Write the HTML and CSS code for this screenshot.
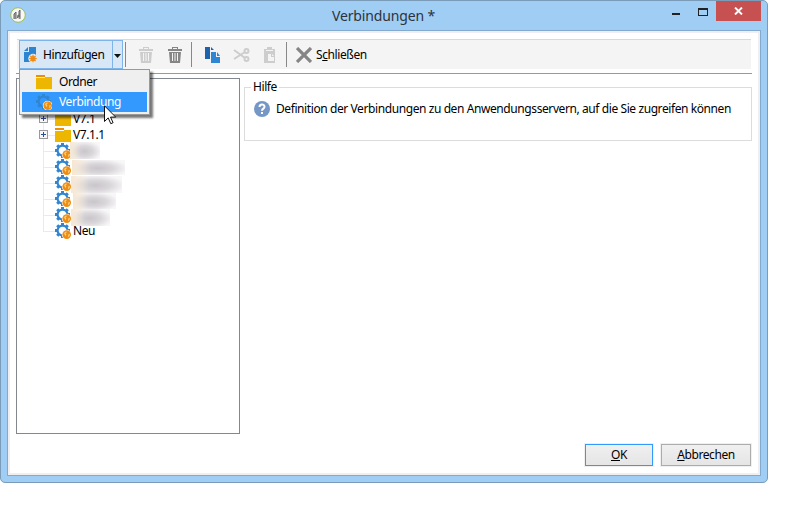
FILE: index.html
```html
<!DOCTYPE html>
<html lang="de">
<head>
<meta charset="utf-8">
<title>Verbindungen</title>
<link rel="stylesheet" href="styles.css">
</head>
<body>
<svg class="defs" width="0" height="0">
  <symbol id="folder" viewBox="0 0 16 16"><path fill="#f09000" d="M0 1h9v2H0z"/><path fill="#edb600" d="M0 4h9V3h7v12H0z"/></symbol>
  <symbol id="gear" viewBox="0 0 16 16">
    <circle cx="7.5" cy="7.5" r="4.9" fill="none" stroke="#3186d2" stroke-width="2.2"/>
    <path d="M7.5 0v3M7.5 12v3M0 7.5h3M12 7.5h3M2.2 2.2l2 2M12.8 2.2l-2 2M2.2 12.8l2-2" stroke="#3186d2" stroke-width="3"/>
  </symbol>
  <symbol id="globe" viewBox="0 0 16 16">
    <circle cx="11.7" cy="11.6" r="4.9" fill="#fff" class="halo"/>
    <circle cx="11.7" cy="11.6" r="4.3" fill="#ef8d0e"/>
    <path d="M9 10l2-1.6 1 .6-1.6 1.6 1 1-1 1.4zM13.6 11l1.4.3-.8 2.2-1.2.4z" fill="#ffdda5" opacity=".85"/>
  </symbol>
  <symbol id="trash" viewBox="0 0 16 16">
    <path fill="currentColor" d="M5 0h6v2h4v2H1V2h4zM6 1v1h4V1zM2 5h12l-1 11H3z"/>
    <path stroke="#f4f4f4" fill="none" d="M5.5 6v8M8 6v8M10.5 6v8"/>
  </symbol>
</svg>
<div class="window">
  <header class="titlebar">
    <svg class="logo" width="16" height="16" viewBox="0 0 16 16"><circle cx="8" cy="8" r="7.3" fill="#f7f7f4" stroke="#9cbd58"/><path d="M4 12V7l2-2v7M7.500 11c0-4 1.500-4 1.500-1V4l1-1v9" fill="#aaa" stroke="#666"/></svg>
    <h1><span>Verbindungen *</span></h1>
    <div class="controls">
      <svg width="50" height="20" viewBox="0 0 50 20"><path d="M6 13h8v2H6z" fill="#222"/><path d="M32 8h10v8H32zm1 2v5h8v-5z" fill="#222" fill-rule="evenodd"/></svg>
      <div class="close"><svg width="9" height="8" viewBox="0 0 9 8"><path d="M1 .5l7 7M8 .5l-7 7" stroke="#fff" stroke-width="1.9"/></svg></div>
    </div>
  </header>
  <main class="client">
    <div class="toolbar">
      <div class="split">
        <div class="split-main">
          <svg width="16" height="16" viewBox="0 0 16 16"><path fill="#2d84d0" d="M5 0h7v15H0V5h5zM0 4l4-4v4z"/><circle cx="9" cy="11.500" r="4.700" fill="#d8e8f7"/><circle cx="9" cy="11.500" r="2.600" fill="#f18b12"/><path d="M9 7.700v7.600M5.200 11.500h7.600M6.300 8.800l5.400 5.400M11.700 8.800l-5.400 5.400" stroke="#f18b12" stroke-width="1.200"/></svg>
          <span>Hinzufügen</span>
        </div>
        <div class="split-arrow"><svg width="8" height="4" viewBox="0 0 8 4"><path d="M0 0h7L3.500 4z" fill="#111"/></svg></div>
        <div class="menu">
          <div class="menu-item"><svg width="16" height="16"><use href="#folder"/></svg><span>Ordner</span></div>
          <div class="menu-item active"><svg width="16" height="16"><use href="#gear"/><use href="#globe"/></svg><span>Verbindung</span></div>
          <svg class="cursor" width="13" height="20" viewBox="0 0 13 20"><path d="M.5.8v15.700l3.700-3.600 2.600 5.800 2.300-1-2.600-5.600h5.200z" fill="#fff" stroke="#111"/></svg>
        </div>
      </div>
      <i class="sep"></i>
      <svg class="tool first off" width="16" height="16"><use href="#trash"/></svg>
      <svg class="tool second" width="16" height="16"><use href="#trash"/></svg>
      <i class="sep"></i>
      <svg class="tool copy" width="16" height="16" viewBox="0 0 16 16"><path d="M0 0h5v12H0zM6 0l3 3H6z" fill="#1c62ad"/><path d="M6 5h5v5h4v6H6zM12 5l3 4h-3z" fill="#2f86d5"/></svg>
      <svg class="tool cut off" width="17" height="16" viewBox="0 0 17 16"><g fill="none" stroke="currentColor" stroke-width="2"><circle cx="13.500" cy="4" r="2"/><circle cx="13.500" cy="12" r="2"/><path d="M1 3l11 8M1 12l11-7"/></g></svg>
      <svg class="tool paste off" width="14" height="16" viewBox="0 0 14 16"><path d="M1 2h3V0h5v2h3v14H1z" fill="currentColor"/><path d="M3 3h7v1H3zM5 7h3v3h3v4H5zM9 7l2 2H9z" fill="#f4f4f4"/></svg>
      <i class="sep"></i>
      <svg class="tool x" width="16" height="16" viewBox="0 0 16 16"><path d="M1 1l14 14M15 1L1 15" stroke="#858585" stroke-width="3.200"/></svg>
      <span>S<u>c</u>hließen</span>
    </div>
    <div class="content">
      <ul class="tree">
        <li><b class="plus"></b><svg width="16" height="16"><use href="#folder"/></svg><span>V7.1</span></li>
        <li><b class="plus"></b><svg width="16" height="16"><use href="#folder"/></svg><span>V7.1.1</span></li>
        <li><svg width="16" height="16"><use href="#gear"/><use href="#globe"/></svg><span class="smudge s1"></span></li>
        <li><svg width="16" height="16"><use href="#gear"/><use href="#globe"/></svg><span class="smudge s2"></span></li>
        <li><svg width="16" height="16"><use href="#gear"/><use href="#globe"/></svg><span class="smudge s3"></span></li>
        <li><svg width="16" height="16"><use href="#gear"/><use href="#globe"/></svg><span class="smudge s4"></span></li>
        <li><svg width="16" height="16"><use href="#gear"/><use href="#globe"/></svg><span class="smudge s5"></span></li>
        <li><svg width="16" height="16"><use href="#gear"/><use href="#globe"/></svg><span>Neu</span></li>
      </ul>
      <section class="help">
        <h2><span>Hilfe</span></h2>
        <div class="help-row">
          <svg width="16" height="16" viewBox="0 0 16 16"><circle cx="8" cy="8" r="8" fill="#7497c7"/><path d="M5.500 6c0-3.200 5-3.200 5-.3 0 2-2.500 1.800-2.500 4" fill="none" stroke="#fff" stroke-width="2"/><path d="M7 11h2v2H7z" fill="#fff"/></svg>
          <span>Definition der Verbindungen zu den Anwendungsservern, auf die Sie zugreifen können</span>
        </div>
      </section>
    </div>
    <footer class="actions">
      <div class="button default"><span><u>O</u>K</span></div>
      <div class="button"><span><u>A</u>bbrechen</span></div>
    </footer>
  </main>
</div>
</body>
</html>
```

FILE: styles.css
```css
* { box-sizing: border-box; }
body { margin: 0; background: #fff; color: #000; font: 12px/16px "Noto Sans", "Open Sans", sans-serif; letter-spacing: -0.41px; }
span { white-space: nowrap; }
svg { display: block; flex: none; }
.defs { position: absolute; }
u { text-decoration-thickness: 1px; text-underline-offset: 1px; }

.window { width: 768px; height: 483px; display: flex; flex-direction: column; padding: 0 6px 6px; background: #a0cdf3; border: 1px solid #7a9cb9; border-radius: 5px; }
.titlebar { height: 29px; display: flex; }
.logo { margin: 6px 0 0 3px; }
.titlebar h1 { flex: 1; margin: 6px 0 0 306px; font: 14px/18px "Noto Sans", sans-serif; letter-spacing: -0.15px; color: #2d333c; }
.controls { display: flex; }
.controls > svg { margin-top: -2px; position: relative; top: 1px; }
.close { width: 45px; height: 20px; display: grid; place-items: center; background: #c75050; }

.client { height: 446px; background: #fff; border: 1px solid #83a9ce; box-shadow: inset 0 0 0 2px #f0eeee; display: flex; flex-direction: column; padding: 8px; }
.toolbar { height: 30px; flex: none; display: flex; align-items: center; margin-left: 1px; width: 734px; background: #f4f4f4; border-top: 1px solid #d9d9d9; }
.split { display: flex; position: relative; height: 29px; width: 104px; margin-left: 2px; border: 1px solid #7eb4ea; background: #d8e7f6; }
.split-main { width: 93px; display: flex; align-items: center; padding-left: 4px; gap: 3px; border-right: 1px solid #7eb4ea; }
.split-arrow { padding: 13px 0 0 1px; }
.menu { position: absolute; z-index: 2; left: -1px; top: 28px; width: 131px; height: 46px; padding: 2px; background: #efefef; border: 1px solid #999; box-shadow: 3px 3px 2px #0008; }
.menu-item { height: 20px; display: flex; align-items: center; padding-left: 14px; gap: 7px; }
.menu-item.active { background: #3399ff; color: #fff; }
.menu-item .halo, .active .halo { fill: #3399ff; }
.cursor { position: absolute; left: 84px; top: 35px; }
.sep { width: 1px; height: 25px; background: #888; margin-left: 2px; }
.tool { margin-left: 13px; color: #858585; }
.tool.off { color: #cdcdcd; }
.tool.first { margin-left: 12px; }
.second + .sep { margin-left: 8px; }
.tool.cut { margin-left: 12px; }
.paste + .sep { margin-left: 9px; }
.tool.x { margin: 0 4px 0 9px; }

.content { flex: none; display: flex; margin-top: 4px; border-top: 1px solid #999; width: 736px; padding-top: 4px; height: 361px; }
.tree { flex: none; width: 224px; height: 356px; margin: 0; padding: 32px 0 0 22px; list-style: none; border: 1px solid #828790; }
.tree li { height: 16px; display: flex; position: relative; padding-left: 16px; gap: 2px; }
.tree li::before { content: ""; position: absolute; left: 4px; top: 0; width: 11px; height: 8px; border-left: 1px solid #eaeaea; border-bottom: 1px solid #eaeaea; }
.tree li:not(:last-child)::after { content: ""; position: absolute; left: 4px; top: 8px; height: 8px; border-left: 1px solid #eaeaea; }
.plus { position: absolute; z-index: 1; left: 0; top: 3px; width: 9px; height: 9px; border: 1px solid #999; background: linear-gradient(#2b4e9c, #2b4e9c) center/5px 1px no-repeat, linear-gradient(#2b4e9c, #2b4e9c) center/1px 5px no-repeat, #f7f7f7; }
.smudge { flex: none; background: linear-gradient(90deg, #f6e7d2, #f6e7d200 35%), radial-gradient(ellipse at 48% 55%, #c9c5ca, #dad7db 40%, #f8f7f8 80%); }
.s1 { width: 30px; height: 17px; margin: -1px 0 0 -3px; }
.s2 { width: 53px; height: 15px; margin: 1px 0 0 -1px; }
.s3 { width: 51px; height: 17px; margin: 1px 0 0 -2px; }
.s4 { width: 43px; height: 16px; margin: 2px 0 0 0; }
.s5 { width: 39px; height: 17px; margin: 2px 0 0 -2px; }

.help { width: 508px; height: 54px; margin: 9px 0 0 4px; border: 1px solid #dcdcdc; }
.help h2 { width: 28px; margin: -9px 0 0 6px; padding-left: 2px; font: inherit; background: #fff; }
.help-row { display: flex; gap: 6px; margin: 6px 0 0 9px; }

.actions { display: flex; justify-content: flex-end; gap: 8px; margin-top: 10px; padding-right: 1px; }
.button { width: 90px; height: 22px; display: grid; place-items: center; border: 1px solid #acacac; background: linear-gradient(#f0f0f0, #e5e5e5); box-shadow: 0 0 0 1px #f0f0f0; }
.button.default { width: 68px; border-color: #3399ff; }
```
